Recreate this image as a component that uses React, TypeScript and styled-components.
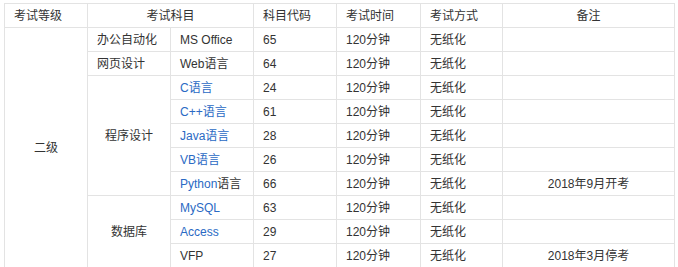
import React from "react";
import styled, { createGlobalStyle } from "styled-components";

const Global = createGlobalStyle`
  html, body { margin: 0; padding: 0; background: #fff; }
  body { font-family: "Liberation Sans", "Noto Sans CJK SC", sans-serif; }
`;

const Wrap = styled.div`
  padding: 3px 0 0 4px;
`;

const Table = styled.table`
  border-collapse: collapse;
  table-layout: fixed;
  width: 670px;
  font-size: 12px;
  color: #333;
`;

const Th = styled.th<{ $center?: boolean }>`
  border: 1px solid #e3e3e3;
  height: 23px;
  padding: 0 0 0 9px;
  font-weight: normal;
  text-align: ${(p) => (p.$center ? "center" : "left")};
  white-space: nowrap;
  line-height: 14px;
`;

const Td = styled.td<{ $center?: boolean }>`
  border: 1px solid #e3e3e3;
  height: 23px;
  padding: 0 0 0 ${(p) => (p.$center ? "0" : "9px")};
  text-align: ${(p) => (p.$center ? "center" : "left")};
  white-space: nowrap;
  line-height: 14px;
`;

const Link = styled.span`
  color: #2a6ac4;
`;

type Row = {
  cat?: { label: string; span: number; center: boolean };
  name: React.ReactNode;
  code: string;
  note?: string;
};

const rows: Row[] = [
  { cat: { label: "办公自动化", span: 1, center: false }, name: "MS Office", code: "65" },
  { cat: { label: "网页设计", span: 1, center: false }, name: "Web语言", code: "64" },
  { cat: { label: "程序设计", span: 5, center: true }, name: <Link>C语言</Link>, code: "24" },
  { name: <Link>C++语言</Link>, code: "61" },
  { name: <Link>Java语言</Link>, code: "28" },
  { name: <Link>VB语言</Link>, code: "26" },
  { name: <><Link>Python</Link>语言</>, code: "66", note: "2018年9月开考" },
  { cat: { label: "数据库", span: 3, center: true }, name: <Link>MySQL</Link>, code: "63" },
  { name: <Link>Access</Link>, code: "29" },
  { name: "VFP", code: "27", note: "2018年3月停考" },
];

export default function App() {
  return (
    <>
      <Global />
      <Wrap>
        <Table>
          <colgroup>
            <col style={{ width: 83 }} />
            <col style={{ width: 83 }} />
            <col style={{ width: 83 }} />
            <col style={{ width: 83 }} />
            <col style={{ width: 84 }} />
            <col style={{ width: 82 }} />
            <col style={{ width: 172 }} />
          </colgroup>
          <thead>
            <tr>
              <Th>考试等级</Th>
              <Th $center colSpan={2} style={{ paddingLeft: 0 }}>考试科目</Th>
              <Th>科目代码</Th>
              <Th>考试时间</Th>
              <Th>考试方式</Th>
              <Th $center style={{ paddingLeft: 0 }}>备注</Th>
            </tr>
          </thead>
          <tbody>
            {rows.map((r, i) => (
              <tr key={i}>
                {i === 0 && (
                  <Td $center rowSpan={rows.length}>二级</Td>
                )}
                {r.cat && (
                  <Td $center={r.cat.center} rowSpan={r.cat.span}>
                    {r.cat.label}
                  </Td>
                )}
                <Td>{r.name}</Td>
                <Td>{r.code}</Td>
                <Td>120分钟</Td>
                <Td>无纸化</Td>
                <Td $center>{r.note ?? ""}</Td>
              </tr>
            ))}
          </tbody>
        </Table>
      </Wrap>
    </>
  );
}
